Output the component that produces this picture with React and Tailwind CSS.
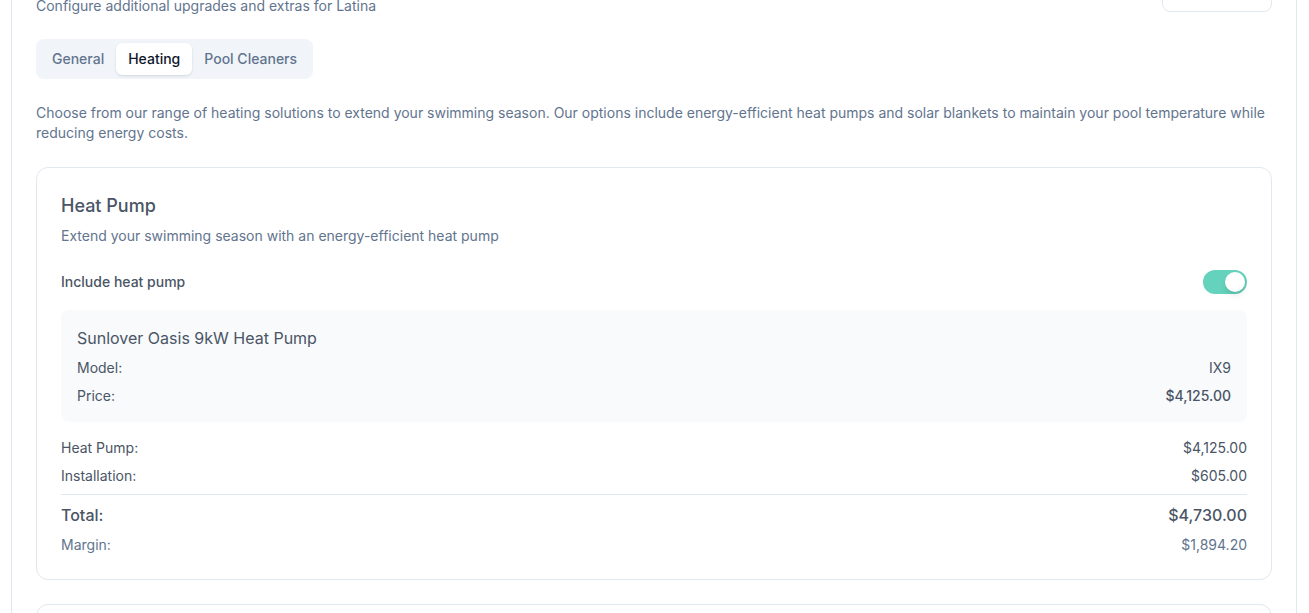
import { useState } from "react";

const Row = ({ label, value, className = "" }) => (
    <div className={`flex items-center justify-between text-sm leading-5 ${className}`}>
        <span>{label}</span>
        <span>{value}</span>
    </div>
);

export default function App() {
    const [tab, setTab] = useState("Heating");
    const [enabled, setEnabled] = useState(true);

    return (
        <div className="min-h-screen bg-white overflow-hidden font-['Inter',sans-serif]">
            <div className="pl-[11px] pr-[12px] -mt-[65px]">
                <div className="border border-slate-200 rounded-xl bg-white px-6 pt-6">
                    {/* Header */}
                    <div className="flex items-start justify-between">
                        <div>
                            <h1 className="text-2xl leading-8 font-semibold text-slate-800">Upgrades &amp; Extras</h1>
                            <p className="mt-1 text-sm leading-5 text-slate-500">Configure additional upgrades and extras for Latina</p>
                        </div>
                        <button className="mt-3 h-10 w-[110px] border border-slate-200 rounded-lg text-sm text-slate-700">Save</button>
                    </div>

                    {/* Tabs */}
                    <div className="mt-[23px] inline-flex items-center p-1 bg-[#f1f5f9] rounded-lg">
                        {["General", "Heating", "Pool Cleaners"].map((t) => (
                            <button
                                key={t}
                                onClick={() => setTab(t)}
                                className={
                                    t === tab
                                        ? "h-8 px-3 rounded-md bg-white text-sm font-medium text-slate-900 shadow-sm"
                                        : "h-8 px-3 rounded-md text-sm font-medium text-slate-500"
                                }
                            >
                                {t}
                            </button>
                        ))}
                    </div>

                    <p className="mt-6 text-sm leading-5 text-slate-500">
                        Choose from our range of heating solutions to extend your swimming season. Our options include energy-efficient heat pumps and solar blankets to maintain your pool temperature while reducing energy costs.
                    </p>

                    {/* Heat pump card */}
                    <div className="mt-6 border border-slate-200 rounded-xl p-6">
                        <h2 className="text-lg leading-7 font-medium text-gray-600">Heat Pump</h2>
                        <p className="mt-1.5 text-sm leading-5 text-slate-500">Extend your swimming season with an energy-efficient heat pump</p>

                        <div className="mt-6 flex items-center justify-between">
                            <span className="text-sm font-medium text-gray-600">Include heat pump</span>
                            <button
                                onClick={() => setEnabled(!enabled)}
                                className={`w-11 h-6 rounded-full p-0.5 flex items-center ${enabled ? "bg-[#64d2bc] justify-end" : "bg-slate-200 justify-start"}`}
                            >
                                <span className="block w-5 h-5 rounded-full bg-white shadow-md" />
                            </button>
                        </div>

                        <div className="mt-4 bg-[#f8fafc] rounded-lg p-4 text-gray-600">
                            <h3 className="text-base leading-6 text-gray-600">Sunlover Oasis 9kW Heat Pump</h3>
                            <Row label="Model:" value={<span className="text-gray-600">IX9</span>} className="mt-2" />
                            <Row label="Price:" value={<span className="font-medium text-gray-600">$4,125.00</span>} className="mt-2" />
                        </div>

                        <div className="mt-4 text-gray-600">
                            <Row label="Heat Pump:" value="$4,125.00" />
                            <Row label="Installation:" value="$605.00" className="mt-2" />
                            <div className="mt-2 border-t border-slate-200 pt-2 flex items-center justify-between text-base leading-6 font-medium text-gray-600">
                                <span>Total:</span>
                                <span>$4,730.00</span>
                            </div>
                            <Row label="Margin:" value="$1,894.20" className="mt-2 text-slate-500" />
                        </div>
                    </div>

                    <div className="mt-6 border border-slate-200 rounded-xl p-6 h-40" />
                </div>
            </div>
        </div>
    );
}
